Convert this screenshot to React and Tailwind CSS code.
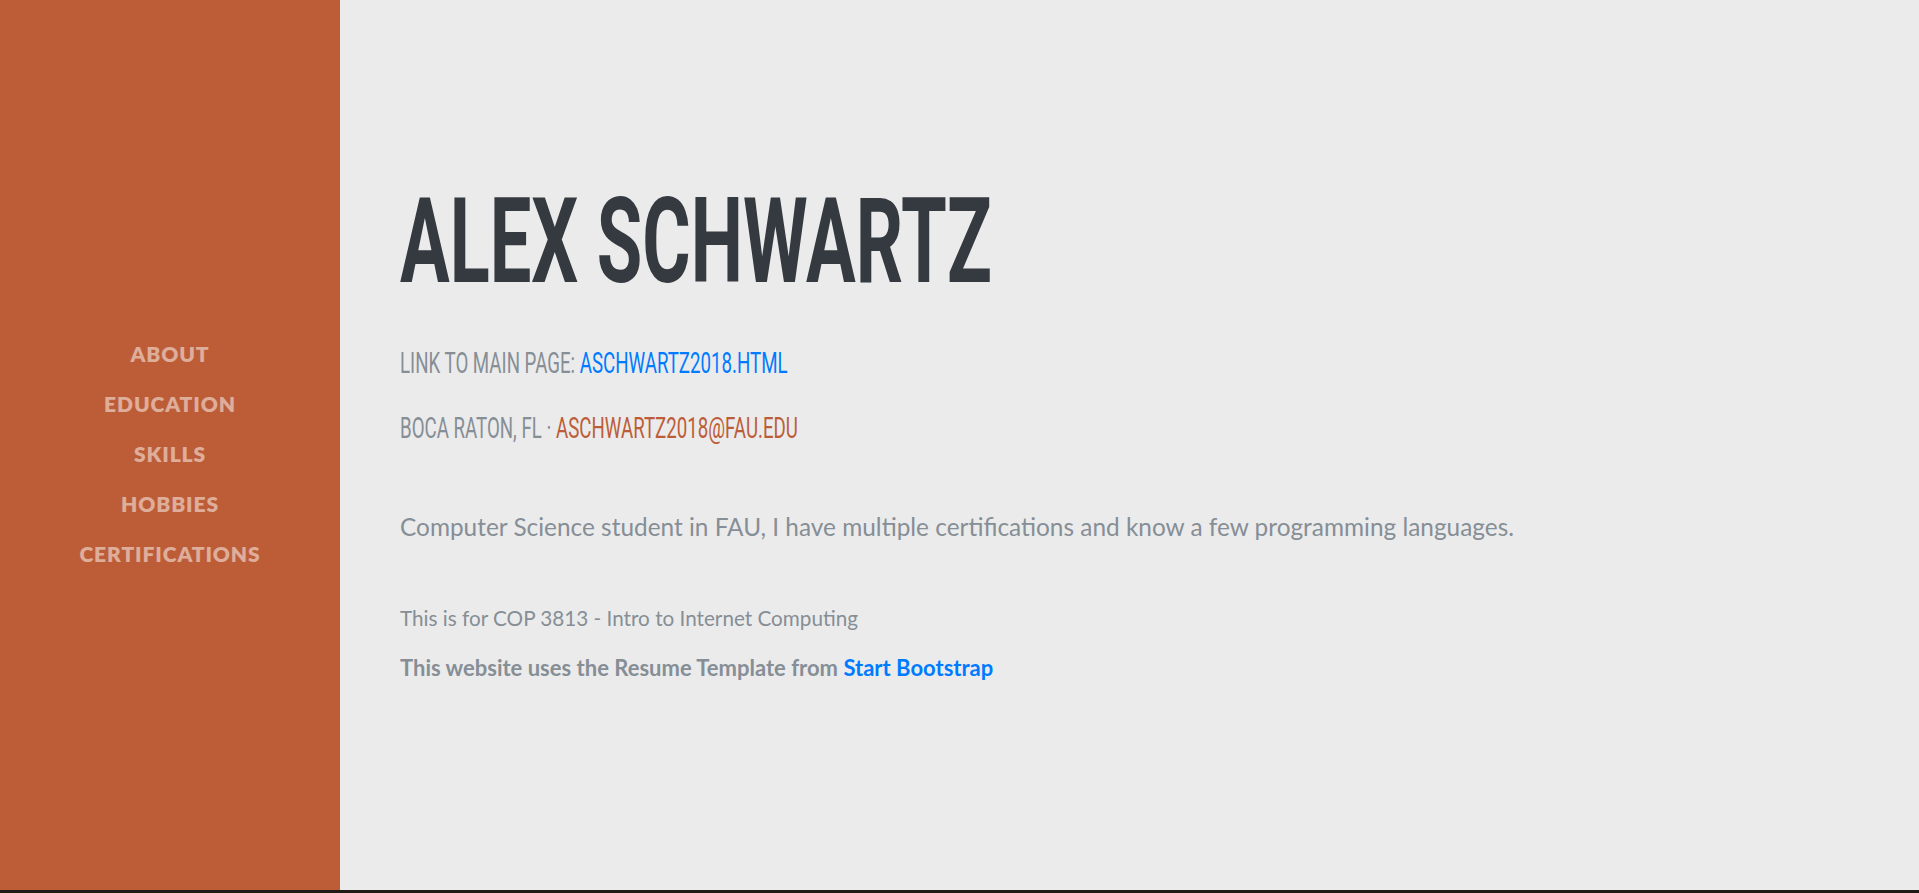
import React from 'react';

const navItems = ['About', 'Education', 'Skills', 'Hobbies', 'Certifications'];

export default function App() {
  return (
    <div className="h-[893px] flex flex-col bg-[#ebebeb] overflow-hidden">
      <div className="flex flex-1">
        <aside className="w-[340px] shrink-0 bg-[#bd5d38] pt-[329px]">
          <ul className="font-['Lato',sans-serif]">
            {navItems.map(item => (
              <li
                key={item}
                className="leading-[50px] text-center text-[21px] font-extrabold tracking-[0.9px] uppercase text-white/50"
              >
                <a href="#">{item}</a>
              </li>
            ))}
          </ul>
        </aside>

        <main className="flex-1 pl-[60px] pt-[183px]">
          <h1 className="font-['Roboto',sans-serif] text-[118px] leading-none font-bold uppercase text-[#343a40] whitespace-nowrap origin-left scale-x-[0.627]">
            Alex Schwartz
          </h1>
          <h3 className="mt-[47px] font-['Roboto',sans-serif] text-[30px] leading-none font-normal uppercase text-[#868e96] whitespace-nowrap origin-left scale-x-[0.623]">
            Link to main page: <a href="#" className="text-[#007bff]">aschwartz2018.html</a>
          </h3>
          <h3 className="mt-[35px] font-['Roboto',sans-serif] text-[30px] leading-none font-normal uppercase text-[#868e96] whitespace-nowrap origin-left scale-x-[0.623]">
            Boca Raton, FL · <a href="#" className="text-[#bd5d38]">aschwartz2018@fau.edu</a>
          </h3>

          <div className="font-['Lato',sans-serif] text-[#868e96]">
            <p className="mt-[72px] text-[24.4px] leading-none">
              Computer Science student in FAU, I have multiple certifications and know a few programming languages.
            </p>
            <p className="mt-[69px] text-[20.7px] leading-none">
              This is for COP 3813 - Intro to Internet Computing
            </p>
            <p className="mt-[28px] text-[22px] leading-none font-bold">
              This website uses the Resume Template from <a href="#" className="text-[#007bff]">Start Bootstrap</a>
            </p>
          </div>
        </main>
      </div>
      <div className="h-[3px] bg-[#201a17]" />
    </div>
  );
}
